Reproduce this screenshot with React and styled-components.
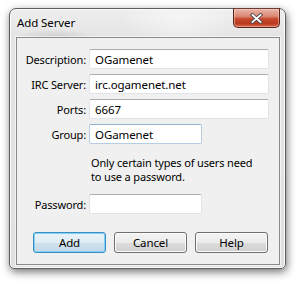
import React from 'react';
import styled, { createGlobalStyle } from 'styled-components';

const GlobalStyle = createGlobalStyle`
  html, body {
    margin: 0;
    padding: 0;
    background: #ffffff;
  }
  body {
    width: 297px;
    height: 284px;
    overflow: hidden;
    font-family: "Noto Sans", "Open Sans", sans-serif;
    font-size: 11px;
    color: #000;
  }
`;

const Stage = styled.div`
  padding: 8px 0 0 9px;
`;

const Window = styled.div`
  box-sizing: border-box;
  width: 277px;
  height: 261px;
  display: flex;
  flex-direction: column;
  padding: 0 5px 3px 6px;
  border: 1px solid #5a5d61;
  border-radius: 7px 7px 5px 5px;
  background:
    radial-gradient(ellipse 40px 10px at 45px 30px, rgba(150, 150, 150, 0.35), transparent),
    radial-gradient(ellipse 60px 30px at 170px 10px, rgba(255, 255, 255, 0.5), transparent),
    linear-gradient(180deg, #eeeeee 0%, #e4e4e4 28px, #e0e0e0 100%);
  box-shadow: inset 0 0 0 1px rgba(255, 255, 255, 0.85), 1px 3px 9px rgba(0, 0, 0, 0.55);
`;

const TitleBar = styled.div`
  height: 28px;
  display: flex;
  align-items: flex-start;
  justify-content: space-between;
`;

const Title = styled.div`
  margin-top: 6px;
  padding-left: 1px;
  font-size: 11.5px;
  line-height: 15px;
  letter-spacing: -0.1px;
  color: #000;
  text-shadow: 0 0 6px rgba(255, 255, 255, 0.9);
`;

const CloseButton = styled.div`
  box-sizing: border-box;
  width: 47px;
  height: 20px;
  margin-top: -1px;
  display: flex;
  align-items: center;
  justify-content: center;
  border: 1px solid #5a231a;
  border-top-color: #6b3a33;
  border-radius: 0 0 5px 5px;
  background: linear-gradient(180deg, #e9b3a6 0%, #dc8a76 40%, #c8482d 55%, #b83b20 80%, #d9674a 100%);
  box-shadow: inset 0 0 0 1px rgba(255, 220, 210, 0.45);
`;

const Client = styled.div`
  flex: 1;
  display: flex;
  flex-direction: column;
  padding: 11px 10px 10px 0;
  border: 1px solid #8a8b8d;
  background: #f0f0f0;
  box-shadow: 0 0 0 1px rgba(255, 255, 255, 0.6);
`;

const Form = styled.div`
  display: grid;
  grid-template-columns: 69px 180px;
  column-gap: 3px;
  row-gap: 5px;
  align-items: center;
`;

const Label = styled.label`
  text-align: right;
  line-height: 15px;
  letter-spacing: -0.15px;
  white-space: nowrap;
`;

const TextBox = styled.div`
  box-sizing: border-box;
  height: 20px;
  width: ${(p) => (p.$short ? '113px' : '180px')};
  padding: 0 4px 0 5px;
  display: flex;
  align-items: center;
  background: #ffffff;
  border: 1px solid ${(p) => (p.$hot ? '#b7cde4' : '#e2e3ea')};
  border-top-color: ${(p) => (p.$hot ? '#8fb0d3' : '#abadb3')};
  border-radius: 2px;
  font-size: 11.5px;
  line-height: 15px;
  letter-spacing: -0.1px;
  white-space: nowrap;
`;

const Note = styled.div`
  grid-column: 2;
  margin: 7px 0 5px;
  padding-left: 2px;
  line-height: 14px;
  letter-spacing: -0.15px;
`;

const ButtonRow = styled.div`
  display: flex;
  gap: 8px;
  margin-top: 18px;
  padding-left: 16px;
`;

const Button = styled.div`
  box-sizing: border-box;
  width: 73px;
  height: 21px;
  display: flex;
  align-items: center;
  justify-content: center;
  border: 1px solid ${(p) => (p.$default ? '#3c8cc4' : '#707070')};
  border-radius: 3px;
  background: ${(p) =>
    p.$default
      ? 'linear-gradient(180deg, #eaf3f9 0%, #e0ecf4 50%, #cfe1ee 51%, #c3d8e8 100%)'
      : 'linear-gradient(180deg, #f3f3f3 0%, #ebebeb 50%, #dddddd 51%, #cfcfcf 100%)'};
  box-shadow: inset 0 0 0 1px ${(p) => (p.$default ? '#7fd4f6' : '#fbfbfb')};
  font-size: 11.5px;
  line-height: 15px;
  letter-spacing: -0.1px;
`;

function CloseGlyph() {
  return (
    <svg width="13" height="11" viewBox="0 0 13 11">
      <path d="M2.5 2 L10.5 9 M10.5 2 L2.5 9" stroke="#4a4a4a" strokeWidth="3.6" strokeLinecap="square" fill="none" />
      <path d="M2.5 2 L10.5 9 M10.5 2 L2.5 9" stroke="#ffffff" strokeWidth="1.8" strokeLinecap="square" fill="none" />
    </svg>
  );
}

export default function App() {
  return (
    <Stage>
      <GlobalStyle />
      <Window>
        <TitleBar>
          <Title>Add Server</Title>
          <CloseButton>
            <CloseGlyph />
          </CloseButton>
        </TitleBar>
        <Client>
          <Form>
            <Label>Description:</Label>
            <TextBox>OGamenet</TextBox>
            <Label>IRC Server:</Label>
            <TextBox>irc.ogamenet.net</TextBox>
            <Label>Ports:</Label>
            <TextBox>6667</TextBox>
            <Label>Group:</Label>
            <TextBox $short $hot>OGamenet</TextBox>
            <Note>
              Only certain types of users need
              <br />
              to use a password.
            </Note>
            <Label>Password:</Label>
            <TextBox $short />
          </Form>
          <ButtonRow>
            <Button $default>Add</Button>
            <Button>Cancel</Button>
            <Button>Help</Button>
          </ButtonRow>
        </Client>
      </Window>
    </Stage>
  );
}
